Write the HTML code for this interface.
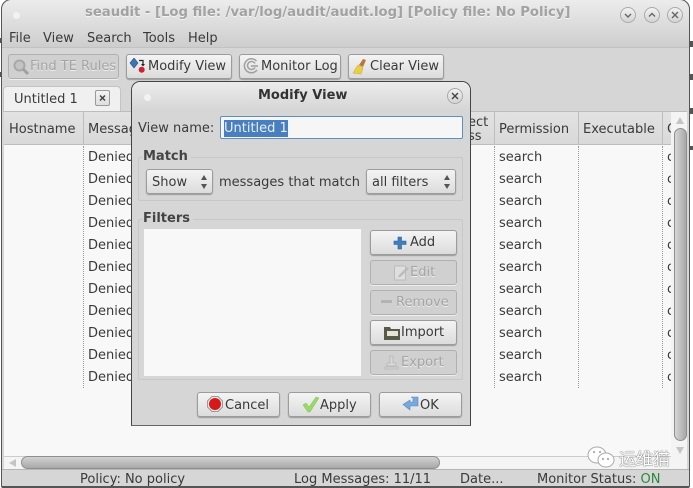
<!DOCTYPE html>
<html><head><meta charset="utf-8"><style>
html,body{margin:0;padding:0}
body{width:693px;height:488px;overflow:hidden;position:relative;background:#fff;font-family:"DejaVu Sans","Liberation Sans","Noto Sans CJK SC",sans-serif;font-size:13px;color:#3a3a3a}
.a{position:absolute;white-space:nowrap}
.win{position:absolute;left:1px;top:-1px;width:687px;height:487px;border:1px solid #555;border-radius:10px 10px 2px 2px;background:#d6d6d6;overflow:hidden}
.btn{position:absolute;box-sizing:border-box;height:25px;border:1px solid #9c9c9c;border-radius:3px;background:linear-gradient(#f4f4f4,#dcdcdc);box-shadow:0 1px 1px #999;line-height:24px;white-space:nowrap;color:#3a3a3a}
.dis{background:#d0d0d0;color:#a4a4a4;text-shadow:0 1px 0 #eee;box-shadow:0 1px 0 #eee;border-color:#b0b0b0}
.th{position:absolute;top:112px;height:33px;line-height:35px;background:linear-gradient(#e2e2e2,#d9d9d9);border-right:1px solid #bdbdbd;border-bottom:1px solid #bdbdbd;box-sizing:border-box;padding-left:4px;white-space:nowrap;overflow:hidden}
.circ{position:absolute;width:16px;height:16px;border-radius:50%;border:1px solid #aaa;background:linear-gradient(#f2f2f2,#d4d4d4);box-sizing:border-box;color:#555;text-align:center}
.dot{position:absolute;width:0;border-left:1px dotted #999}
.sec{position:absolute;border:1px solid #c8c8c8;box-sizing:border-box;border-radius:2px}
.lab{position:absolute;font-weight:bold;background:#d6d6d6;padding-right:3px;color:#444}
</style></head><body>
<div class="a" style="left:690px;top:41px;width:3px;height:6px;background:#555"></div>
<div class="a" style="left:690px;top:74px;width:3px;height:6px;background:#555"></div>
<div class="a" style="left:690px;top:108px;width:3px;height:6px;background:#555"></div>
<div class="a" style="left:690px;top:146px;width:3px;height:4px;background:#555"></div>
<div class="a" style="left:0;top:38px;width:2px;height:5px;background:#555"></div>
<div class="a" style="left:0;top:72px;width:2px;height:5px;background:#555"></div>

<div class="win"></div>
<div class="a" style="left:2px;top:0;width:687px;height:48px;border-radius:10px 10px 0 0;background:linear-gradient(#ececec,#cdcdcd)"></div>
<div class="a" style="left:2px;top:47px;width:687px;height:1px;background:#c2c2c2"></div>
<div class="a" style="left:13px;top:12px;width:7px;height:7px;border-radius:50%;background:#f2f2f2"></div>
<div class="a" style="left:85px;top:4px;font-weight:bold;color:#a2a2a2;text-shadow:0 1px 0 #f4f4f4;font-size:13.2px;line-height:18px">seaudit - [Log file: /var/log/audit/audit.log] [Policy file: No Policy]</div>
<div class="circ" style="left:620px;top:7px"><svg width="14" height="14"><path d="M4 6l3 3 3-3" fill="none" stroke="#666" stroke-width="1.400"/></svg></div>
<div class="circ" style="left:644px;top:7px"><svg width="14" height="14"><path d="M4 8.500l3-3 3 3" fill="none" stroke="#666" stroke-width="1.400"/></svg></div>
<div class="circ" style="left:667px;top:7px"><svg width="14" height="14"><path d="M4 4l6 6M10 4l-6 6" fill="none" stroke="#666" stroke-width="1.400"/></svg></div>

<div class="a" style="left:9px;top:30px;line-height:18px">File</div>
<div class="a" style="left:43px;top:30px;line-height:18px">View</div>
<div class="a" style="left:87px;top:30px;line-height:18px">Search</div>
<div class="a" style="left:143px;top:30px;line-height:18px">Tools</div>
<div class="a" style="left:188px;top:30px;line-height:18px">Help</div>

<div class="btn dis" style="left:8px;top:54px;width:111px"><span class="a" style="left:21px;top:0">Find TE Rules</span>
<svg class="a" style="left:3px;top:3px" width="18" height="18"><circle cx="7.500" cy="7.500" r="5" fill="#c4c4c4" stroke="#a8a8a8" stroke-width="2"/><path d="M11 11l5 5" stroke="#a0a0a0" stroke-width="3"/></svg></div>
<div class="btn" style="left:126px;top:54px;width:106px"><span class="a" style="left:21px;top:0">Modify View</span>
<svg class="a" style="left:2px;top:3px" width="20" height="19"><path d="M5 0l4 5-4 5-4-5z" fill="#3f74b0" stroke="#234f80" stroke-width=".6"/><circle cx="12.700" cy="11.700" r="3" fill="#d02030"/><path d="M10 2.500h4v4" fill="none" stroke="#222" stroke-width="1.200"/><path d="M12 6h4l-2 2.500z" fill="#222"/></svg></div>
<div class="btn" style="left:239px;top:54px;width:102px"><span class="a" style="left:21px;top:0">Monitor Log</span>
<svg class="a" style="left:3px;top:2px" width="18" height="18"><path d="M13.500 4A7 7 0 1 0 14 13" fill="none" stroke="#a0a0a0" stroke-width="1.500"/><path d="M12 6.500A4 4 0 1 0 12 10.500" fill="none" stroke="#a0a0a0" stroke-width="1.500"/><path d="M8 8h7v2H8z" fill="#b0b0b0"/></svg></div>
<div class="btn" style="left:348px;top:54px;width:96px"><span class="a" style="left:21px;top:0">Clear View</span>
<svg class="a" style="left:3px;top:2px" width="18" height="20"><path d="M1 16l5-8 5 3-2 6z" fill="#e8cf45" stroke="#d0b030" stroke-width=".6"/><path d="M7 8l4-6 3 1-3 7z" fill="#b9783a"/></svg></div>

<div class="a" style="left:3px;top:86px;width:118px;height:26px;box-sizing:border-box;background:#f0f0f0;border:1px solid #c4c4c4;border-bottom:0;border-radius:4px 4px 0 0"></div>
<div class="a" style="left:14px;top:90px;line-height:20px">Untitled 1</div>
<div class="a" style="left:95px;top:90px;width:15px;height:16px;box-sizing:border-box;border:1px solid #999;border-radius:2px;background:linear-gradient(#f2f2f2,#dedede)"><svg class="a" style="left:0;top:0" width="13" height="14"><path d="M4 4.500l5 5M9 4.500l-5 5" stroke="#444" stroke-width="1.500"/></svg></div>

<div class="a" style="left:4px;top:111px;width:683px;height:358px;background:#f8f8f8;border-top:1px solid #bcbcbc"></div>
<div class="th" style="left:4px;width:80px;padding-left:5px">Hostname</div>
<div class="th" style="left:84px;width:60px">Message</div>
<div class="th" style="left:430px;width:65px;padding-left:38px;line-height:14px;padding-top:4px">ect<br>ss</div>
<div class="th" style="left:495px;width:84px">Permission</div>
<div class="th" style="left:579px;width:84px">Executable</div>
<div class="th" style="left:663px;width:24px">C</div>
<div class="dot" style="left:83px;top:146px;height:242px"></div>
<div class="dot" style="left:494px;top:146px;height:242px"></div>
<div class="dot" style="left:578px;top:146px;height:242px"></div>
<div class="dot" style="left:662px;top:146px;height:242px"></div>

<div class="a" style="left:88px;top:147px;line-height:22px">Denied<br>Denied<br>Denied<br>Denied<br>Denied<br>Denied<br>Denied<br>Denied<br>Denied<br>Denied<br>Denied</div>
<div class="a" style="left:499px;top:147px;line-height:22px">search<br>search<br>search<br>search<br>search<br>search<br>search<br>search<br>search<br>search<br>search</div>
<div class="a" style="left:667px;top:147px;line-height:22px">c<br>c<br>c<br>c<br>c<br>c<br>c<br>c<br>c<br>c<br>c</div>

<div class="a" style="left:671px;top:112px;width:16px;height:357px;background:#f4f4f4"></div>
<div class="a" style="left:674px;top:128px;width:13px;height:313px;box-sizing:border-box;border:1px solid #8f8f8f;border-radius:7px;background:linear-gradient(90deg,#d6d6d6,#a8a8a8)"></div>
<svg class="a" style="left:675px;top:116px" width="10" height="9"><path d="M5 1l4 7H1z" fill="#c4c4c4"/></svg>
<svg class="a" style="left:675px;top:446px" width="10" height="9"><path d="M5 8L9 1H1z" fill="#c4c4c4"/></svg>
<div class="a" style="left:4px;top:456px;width:667px;height:13px;background:#f4f4f4;border-top:1px solid #ccc;border-radius:0 0 0 5px;box-sizing:border-box"></div>
<svg class="a" style="left:8px;top:458px" width="9" height="10"><path d="M1 5l7-4v8z" fill="#c4c4c4"/></svg>
<div class="a" style="left:21px;top:456px;width:419px;height:13px;box-sizing:border-box;border:1px solid #8f8f8f;border-radius:7px;background:linear-gradient(#d2d2d2,#a8a8a8)"></div>
<div class="a" style="left:2px;top:469px;width:687px;height:18px;background:#d6d6d6;border-top:1px solid #b6b6b6;border-bottom:1px solid #555;box-sizing:border-box"></div>
<div class="a" style="left:80px;top:472px;line-height:16px">Policy: No policy</div>
<div class="a" style="left:294px;top:472px;line-height:16px">Log Messages: 11/11</div>
<div class="a" style="left:460px;top:472px;line-height:16px">Date...</div>
<div class="a" style="left:537px;top:472px;line-height:16px">Monitor Status: <span style="color:#2a8a3a">ON</span></div>

<svg class="a" style="left:586px;top:445px" width="30" height="24"><ellipse cx="11" cy="10" rx="9" ry="8" fill="#fff" stroke="#aaa"/><ellipse cx="20" cy="15" rx="8" ry="7" fill="#fff" stroke="#aaa"/><circle cx="8" cy="7" r="1" fill="#999"/><circle cx="14" cy="7" r="1" fill="#999"/><circle cx="17" cy="14" r="1" fill="#999"/><circle cx="22" cy="14" r="1" fill="#999"/></svg>
<div class="a" style="left:619px;top:447px;font-size:17px;line-height:22px;color:#fff;text-shadow:0 0 1px #555,0 0 1px #555;font-family:'Noto Sans CJK SC',sans-serif">运维猫</div>

<div class="a" style="left:131px;top:81px;width:340px;height:345px;box-sizing:border-box;border:1px solid #444;border-radius:9px 9px 0 0;background:#d6d6d6;border-bottom-color:#666"></div>
<div class="a" style="left:132px;top:82px;width:338px;height:28px;border-radius:8px 8px 0 0;background:linear-gradient(#ececec,#d6d6d6)"></div>
<div class="a" style="left:144px;top:94px;width:7px;height:7px;border-radius:50%;background:#f2f2f2"></div>
<div class="a" style="left:258px;top:87px;font-weight:bold;color:#333;line-height:18px">Modify View</div>
<div class="circ" style="left:447px;top:88px"><svg width="14" height="14"><path d="M4 4l6 6M10 4l-6 6" fill="none" stroke="#444" stroke-width="1.400"/></svg></div>

<div class="a" style="left:138px;top:120px;line-height:18px">View name:</div>
<div class="a" style="left:220px;top:116px;width:243px;height:23px;box-sizing:border-box;border:1px solid #5f8fbf;border-radius:2px;background:#f6f6f6"></div>
<div class="a" style="left:224px;top:120px;line-height:17px;background:#4a7fbf;color:#e6eef8">Untitled 1</div>

<div class="sec" style="left:138px;top:157px;width:325px;height:44px"></div>
<div class="lab" style="left:143px;top:148px;line-height:17px">Match</div>
<div class="btn" style="left:146px;top:169px;width:67px"><span class="a" style="left:5px;top:1px">Show</span><svg class="a" style="left:52px;top:4px" width="10" height="16"><path d="M5 1l3 5H2zM5 15l3-5H2z" fill="#555"/></svg></div>
<div class="a" style="left:219px;top:174px;line-height:18px">messages that match</div>
<div class="btn" style="left:366px;top:169px;width:90px"><span class="a" style="left:5px;top:1px">all filters</span><svg class="a" style="left:75px;top:4px" width="10" height="16"><path d="M5 1l3 5H2zM5 15l3-5H2z" fill="#555"/></svg></div>

<div class="sec" style="left:138px;top:219px;width:325px;height:161px"></div>
<div class="lab" style="left:143px;top:210px;line-height:17px">Filters</div>
<div class="a" style="left:144px;top:229px;width:217px;height:147px;background:#f8f8f8"></div>

<div class="btn" style="left:370px;top:230px;width:87px"><span class="a" style="left:39px;top:0">Add</span><svg class="a" style="left:22px;top:5px" width="15" height="15"><path d="M5 1h3.500v4H13v3.500H8.500V13H5V8.500H1V5h4z" fill="#3f7ec0" stroke="#2a5a90" stroke-width=".6"/></svg></div>
<div class="btn dis" style="left:370px;top:260px;width:87px"><span class="a" style="left:39px;top:0">Edit</span><svg class="a" style="left:22px;top:3px" width="17" height="18"><path d="M1.500 2h11v14h-11z" fill="#dedede" stroke="#bbb"/><path d="M6 11l8-8 2 1.500-8 8-3 1z" fill="#bbb"/></svg></div>
<div class="btn dis" style="left:370px;top:290px;width:87px"><span class="a" style="left:25px;top:0">Remove</span><svg class="a" style="left:9px;top:8px" width="13" height="6"><path d="M1 1h11v3H1z" fill="#b4b4b4"/></svg></div>
<div class="btn" style="left:370px;top:320px;width:87px"><span class="a" style="left:30px;top:0">Import</span><svg class="a" style="left:12px;top:5px" width="18" height="15"><path d="M1 1h6l1 2h9v11H1z" fill="#5a5a4a"/><path d="M4 5h11v5H4z" fill="#e4e4d8"/></svg></div>
<div class="btn dis" style="left:370px;top:350px;width:87px"><span class="a" style="left:30px;top:0">Export</span><svg class="a" style="left:13px;top:3px" width="16" height="18"><path d="M6 2h3v7h3v3H3V9h3zM1 13h13v2H1z" fill="#d8d8d8" stroke="#b4b4b4" stroke-width=".8"/></svg></div>

<div class="btn" style="left:197px;top:392px;width:83px"><span class="a" style="left:27px;top:1px">Cancel</span><svg class="a" style="left:9px;top:3px" width="16" height="16"><path d="M5 .5h6L15.500 5v6L11 15.500H5L.5 11V5z" fill="#f0e8e8" stroke="#999"/><circle cx="8" cy="8" r="6" fill="#d81818"/></svg></div>
<div class="btn" style="left:288px;top:392px;width:83px"><span class="a" style="left:31px;top:1px">Apply</span><svg class="a" style="left:13px;top:3px" width="18" height="18"><path d="M1 9l3-2 3 4 7-10 3 1-9 14H6z" fill="#9ad86a" stroke="#84bc58" stroke-width=".5"/></svg></div>
<div class="btn" style="left:379px;top:392px;width:83px"><span class="a" style="left:40px;top:1px">OK</span><svg class="a" style="left:22px;top:3px" width="18" height="18"><path d="M9 1h7v9H8v4L1 8.500 8 4v2h3V2z" fill="#78a8dc" stroke="#5688c0" stroke-width=".6"/></svg></div>
</body></html>
